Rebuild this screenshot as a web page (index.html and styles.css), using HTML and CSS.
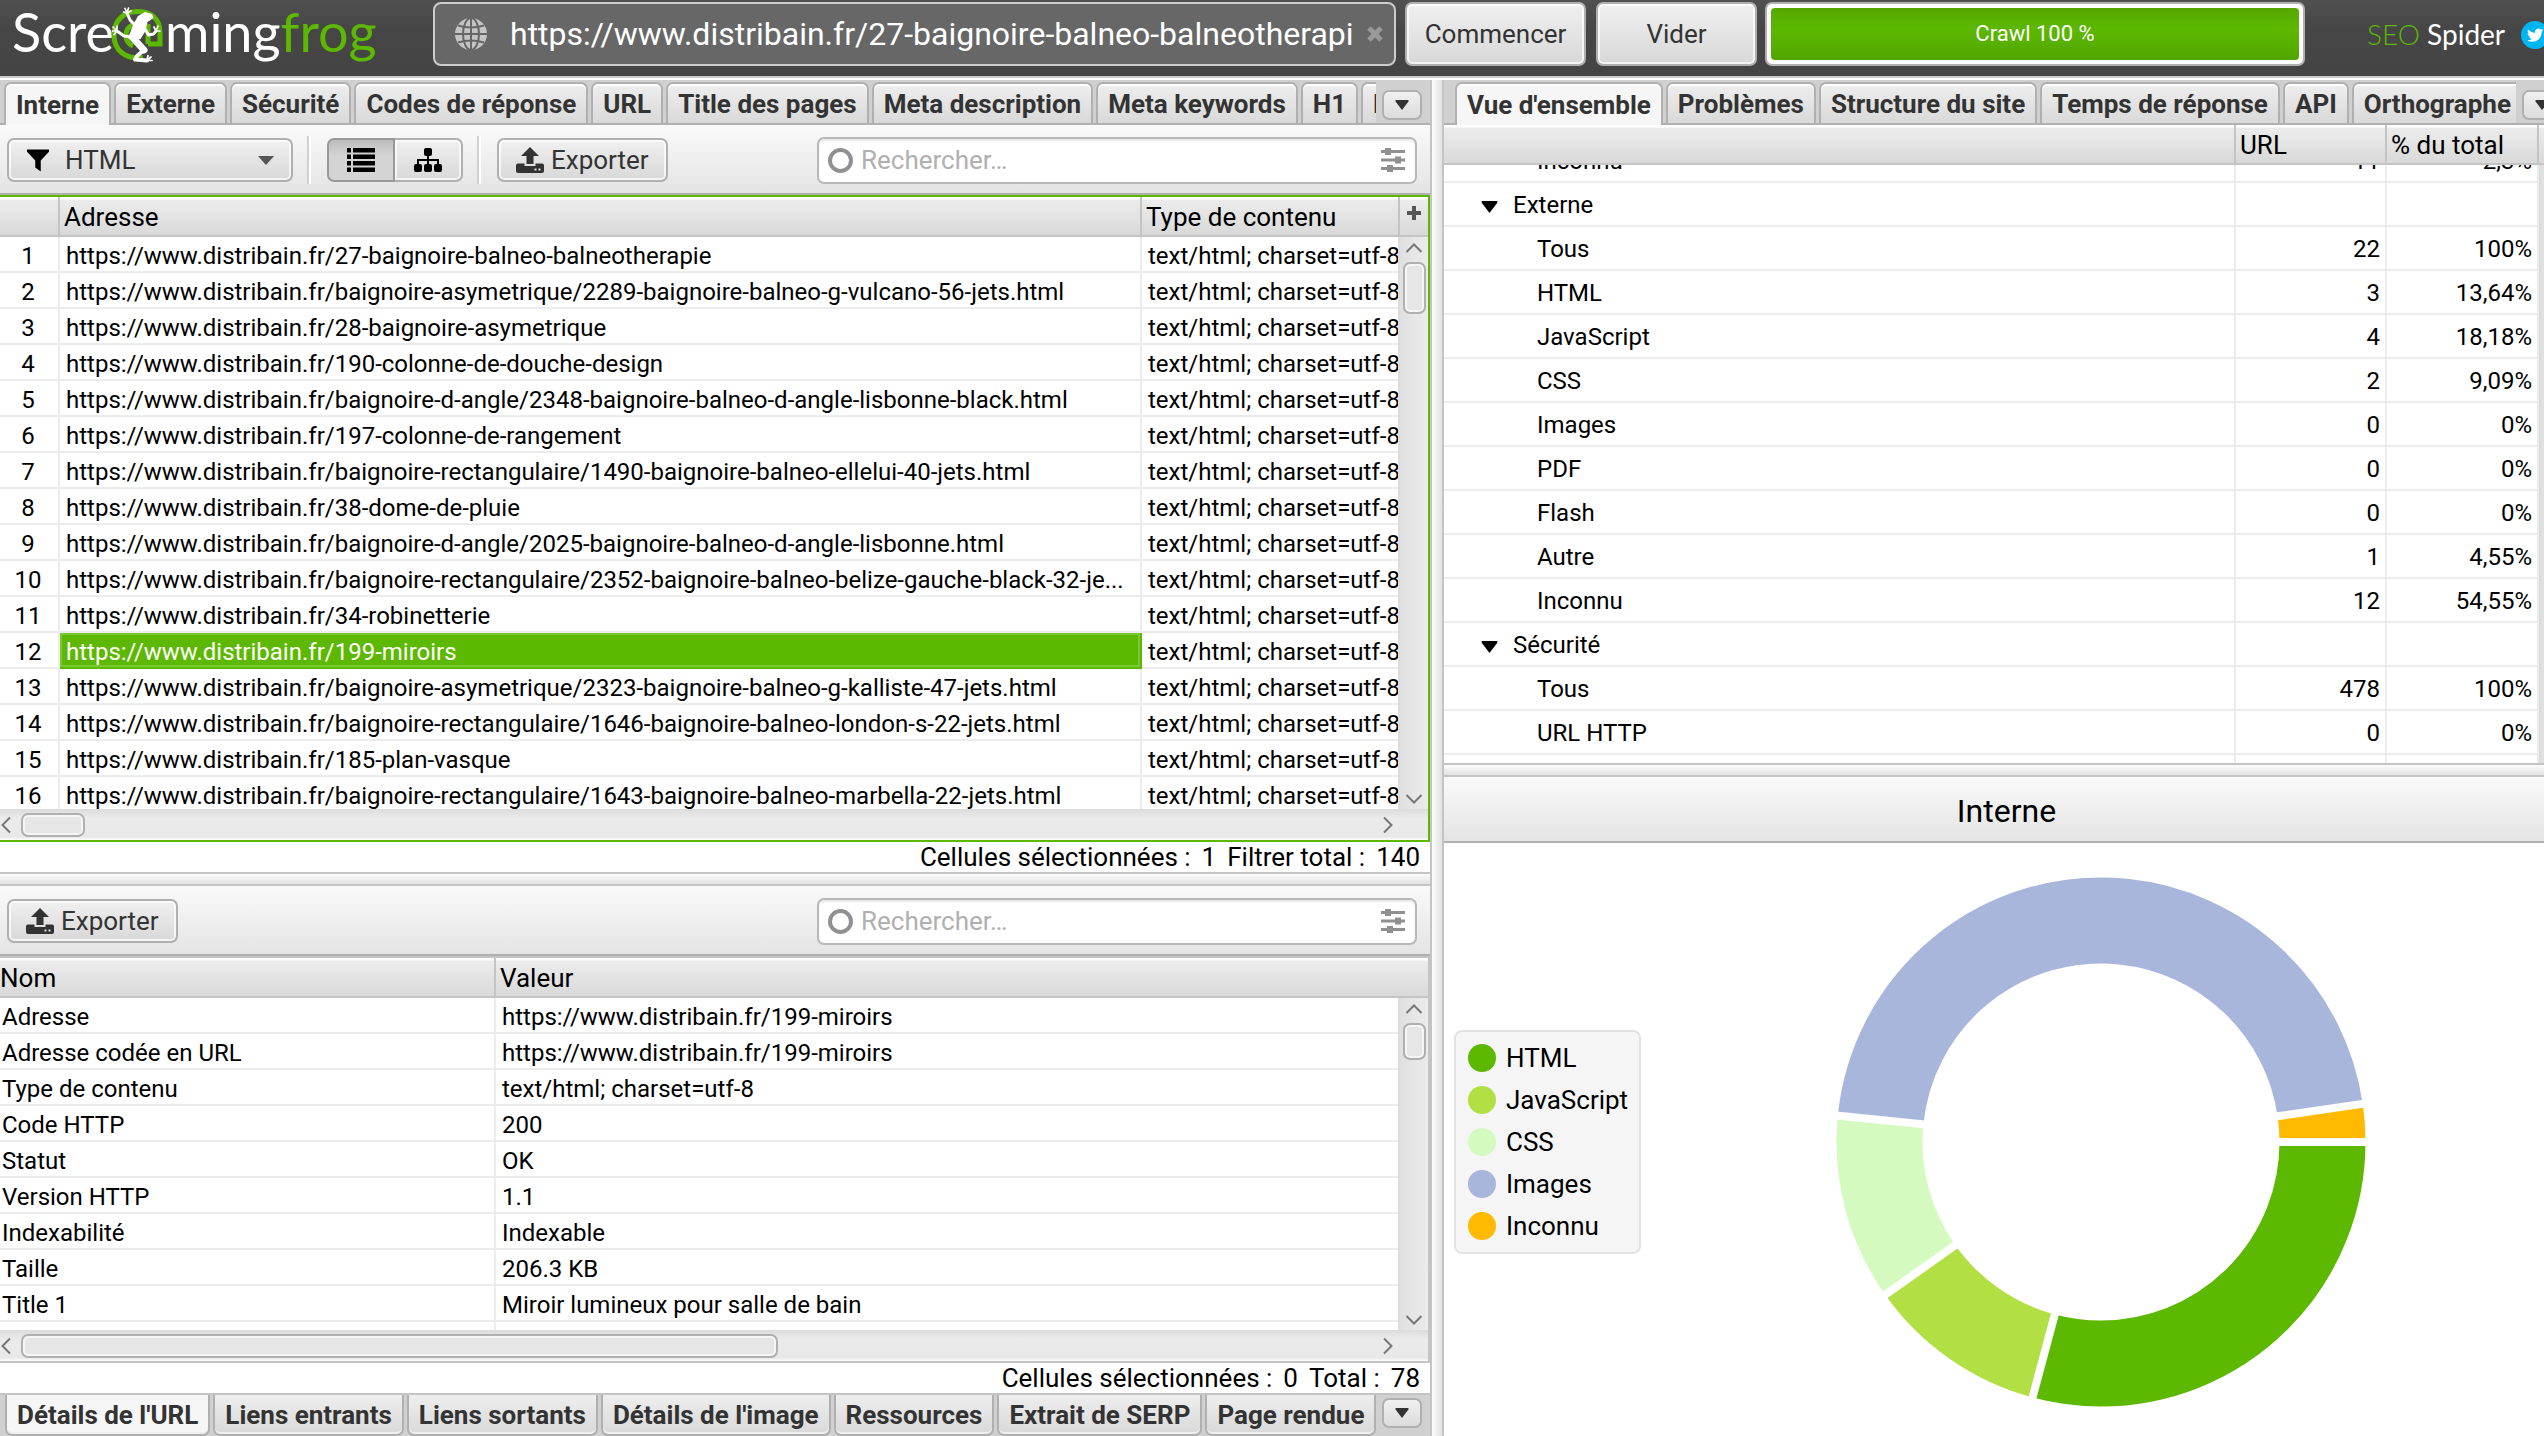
FILE: index.html
```html
<!DOCTYPE html>
<html lang="fr">
<head>
<meta charset="utf-8">
<title>Screaming Frog SEO Spider</title>
<link rel="stylesheet" href="styles.css">
</head>
<body>
<svg class="defs" aria-hidden="true">
  <symbol id="i-export" viewBox="0 0 28 26"><path d="M14 0l9 9h-5.500v8h-7V9H5z"/><path d="M2 16.500h6.500V19h11v-2.500H26a2 2 0 0 1 2 2V24a2 2 0 0 1-2 2H2a2 2 0 0 1-2-2v-5.500a2 2 0 0 1 2-2zM18.500 21.500v2h2v-2zm4 0v2h2v-2z" fill-rule="evenodd"/></symbol>
  <symbol id="i-sliders" viewBox="0 0 24 24"><path d="M0 2h24v3H0zM0 10.500h24v3H0zM0 19h24v3H0z"/><path d="M4 0h6v7H4zM14 8.500h6v7h-6zM6 17h6v7H6z"/></symbol>
  <symbol id="i-down" viewBox="0 0 16 12"><path d="M0 0h16v1.500L8 12 0 1.500z"/></symbol>
  <symbol id="i-chev" viewBox="0 0 18 10"><path d="M1.500 9L9 1.500 16.500 9" fill="none" stroke="#777" stroke-width="2"/></symbol>
</svg>
<div class="app">
  <header class="topbar">
    <div class="logo" aria-label="Screaming Frog">
      <span>Scre</span>
      <svg class="frog" viewBox="0 0 54 56">
        <path d="M32 50.500C14 53 3 43 3 28 3 13 13 4.500 27 4.500S49 13 49 25v12H37M30 17c-9-1-15 4-15 11 0 6 2 9 7 11M37 17v20" fill="none" stroke="#5cb800" stroke-width="5"/>
        <path d="M34 5l7 2 1.500 4-6 4-2 9-5 8-7 1.500-4.500-5L22 18l5-9z" fill="#fff"/>
        <g fill="none" stroke="#fff" stroke-linecap="round" stroke-linejoin="round">
          <path d="M24 18l-5-5-3-7M20 30l-7-1-7-5M34 22l3.500 6 5-1 2.500-3" stroke-width="3"/>
          <path d="M21 30l12 13" stroke-width="7"/>
          <path d="M33 43l-7 6-2 3.500 12 1" stroke-width="4"/>
          <path d="M16 6l-3.500-1M16 6l-2-4.500M16 6l1.500-5M16 6l4-2M6 24l-4-4M6 24H1.500M6 24l-3 3.500M6 24V19M45 24l-2-4M45 24l2-5M45 24l4 0M36 53.500h5M36 53.500l4-3.500M36 53.500l1-5" stroke-width="1.700"/>
        </g>
      </svg>
      <span>ming</span><span class="brand">frog</span>
    </div>
    <div class="urlbox">
      <svg class="globe" viewBox="0 0 32 32"><circle cx="16" cy="16" r="16" fill="#c4c4c4"/><g fill="none" stroke="#666" stroke-width="2"><path d="M16 0v32M0 16h32M3 7.500q13 4 26 0M3 24.500q13-4 26 0"/><ellipse cx="16" cy="16" rx="8" ry="16"/></g></svg>
      <input class="url-input" type="text" aria-label="URL" value="https://www.distribain.fr/27-baignoire-balneo-balneotherapie">
      <button class="clear" aria-label="Effacer"><svg viewBox="0 0 18 18"><path d="M3 3l12 12M15 3L3 15" stroke="#999" stroke-width="5"/></svg></button>
    </div>
    <button class="btn btn-start">Commencer</button>
    <button class="btn btn-clear">Vider</button>
    <div class="progress"><div class="bar">Crawl 100 %</div></div>
    <div class="product"><span class="brand light">SEO</span> Spider</div>
    <a class="twitter" href="#" aria-label="Twitter"><svg viewBox="0 0 28 28"><circle cx="14" cy="14" r="14" fill="#00b6f1"/><path transform="translate(6 6) scale(.68)" fill="#fff" d="M23.953 4.570a10 10 0 01-2.825.775 4.958 4.958 0 002.163-2.723c-.951.555-2.005.959-3.127 1.184a4.920 4.920 0 00-8.384 4.482C7.690 8.095 4.067 6.130 1.640 3.162a4.822 4.822 0 00-.666 2.475c0 1.710.870 3.213 2.188 4.096a4.904 4.904 0 01-2.228-.616v.060a4.923 4.923 0 003.946 4.827 4.996 4.996 0 01-2.212.085 4.936 4.936 0 004.604 3.417 9.867 9.867 0 01-6.102 2.105c-.390 0-.779-.023-1.170-.067a13.995 13.995 0 007.557 2.209c9.053 0 13.998-7.496 13.998-13.985 0-.210 0-.420-.015-.630A9.935 9.935 0 0024 4.590z"/></svg></a>
  </header>

  <main class="work">
    <section class="left">
      <div class="pane">
        <nav class="tabs">
          <div class="tablist">
            <button class="tab active">Interne</button><button class="tab">Externe</button><button class="tab">Sécurité</button><button class="tab">Codes de réponse</button><button class="tab">URL</button><button class="tab">Title des pages</button><button class="tab">Meta description</button><button class="tab">Meta keywords</button><button class="tab">H1</button><button class="tab">H2</button>
          </div>
          <button class="more" aria-label="Plus d'onglets"><svg viewBox="0 0 16 12"><use href="#i-down"/></svg></button>
        </nav>
        <div class="toolbar">
          <div class="filter">
            <svg class="funnel" viewBox="0 0 24 24"><path d="M0 0h24v2.500L15 12v12l-6-4.500V12L0 2.500z"/></svg>
            <select class="btn" aria-label="Filtre"><option>HTML</option></select>
            <svg class="caret" viewBox="0 0 18 10"><path d="M0 0h18L9 10z" fill="#555"/></svg>
          </div>
          <i class="sep"></i>
          <div class="toggle">
            <button class="btn on" aria-label="Liste"><svg viewBox="0 0 28 24"><path d="M0 0h4v4.500H0zM6 0h22v4.500H6zM0 6.500h4V11H0zM6 6.500h22V11H6zM0 13h4v4.500H0zM6 13h22v4.500H6zM0 19.500h4V24H0zM6 19.500h22V24H6z"/></svg></button><button class="btn" aria-label="Arborescence"><svg viewBox="0 0 28 24"><rect x="10" width="8" height="8" rx="2"/><rect y="16" width="8" height="8" rx="2"/><rect x="10" y="16" width="8" height="8" rx="2"/><rect x="20" y="16" width="8" height="8" rx="2"/><path d="M14 6v11M4 17v-5h20v5" fill="none" stroke="#000" stroke-width="2"/></svg></button>
          </div>
          <i class="sep"></i>
          <button class="btn export"><svg viewBox="0 0 28 26"><use href="#i-export"/></svg>Exporter</button>
          <div class="search"><i class="ring"></i><input type="text" placeholder="Rechercher…" aria-label="Rechercher dans les URL"><svg viewBox="0 0 24 24"><use href="#i-sliders"/></svg></div>
        </div>
        <div class="grid focus">
          <div class="view">
            <table class="data urls">
              <colgroup><col class="c-num"><col><col class="c-type"></colgroup>
              <thead><tr><th></th><th>Adresse</th><th>Type de contenu</th></tr></thead>
              <tbody>
                <tr><td>1</td><td>https://www.distribain.fr/27-baignoire-balneo-balneotherapie</td><td>text/html; charset=utf-8</td></tr>
                <tr><td>2</td><td>https://www.distribain.fr/baignoire-asymetrique/2289-baignoire-balneo-g-vulcano-56-jets.html</td><td>text/html; charset=utf-8</td></tr>
                <tr><td>3</td><td>https://www.distribain.fr/28-baignoire-asymetrique</td><td>text/html; charset=utf-8</td></tr>
                <tr><td>4</td><td>https://www.distribain.fr/190-colonne-de-douche-design</td><td>text/html; charset=utf-8</td></tr>
                <tr><td>5</td><td>https://www.distribain.fr/baignoire-d-angle/2348-baignoire-balneo-d-angle-lisbonne-black.html</td><td>text/html; charset=utf-8</td></tr>
                <tr><td>6</td><td>https://www.distribain.fr/197-colonne-de-rangement</td><td>text/html; charset=utf-8</td></tr>
                <tr><td>7</td><td>https://www.distribain.fr/baignoire-rectangulaire/1490-baignoire-balneo-ellelui-40-jets.html</td><td>text/html; charset=utf-8</td></tr>
                <tr><td>8</td><td>https://www.distribain.fr/38-dome-de-pluie</td><td>text/html; charset=utf-8</td></tr>
                <tr><td>9</td><td>https://www.distribain.fr/baignoire-d-angle/2025-baignoire-balneo-d-angle-lisbonne.html</td><td>text/html; charset=utf-8</td></tr>
                <tr><td>10</td><td>https://www.distribain.fr/baignoire-rectangulaire/2352-baignoire-balneo-belize-gauche-black-32-je...</td><td>text/html; charset=utf-8</td></tr>
                <tr><td>11</td><td>https://www.distribain.fr/34-robinetterie</td><td>text/html; charset=utf-8</td></tr>
                <tr><td>12</td><td class="selected">https://www.distribain.fr/199-miroirs</td><td>text/html; charset=utf-8</td></tr>
                <tr><td>13</td><td>https://www.distribain.fr/baignoire-asymetrique/2323-baignoire-balneo-g-kalliste-47-jets.html</td><td>text/html; charset=utf-8</td></tr>
                <tr><td>14</td><td>https://www.distribain.fr/baignoire-rectangulaire/1646-baignoire-balneo-london-s-22-jets.html</td><td>text/html; charset=utf-8</td></tr>
                <tr><td>15</td><td>https://www.distribain.fr/185-plan-vasque</td><td>text/html; charset=utf-8</td></tr>
                <tr><td>16</td><td>https://www.distribain.fr/baignoire-rectangulaire/1643-baignoire-balneo-marbella-22-jets.html</td><td>text/html; charset=utf-8</td></tr>
              </tbody>
            </table>
          </div>
          <div class="vcol">
            <button class="corner divided" aria-label="Colonnes"><svg viewBox="0 0 14 14"><path d="M7 0v14M0 7h14" stroke="#555" stroke-width="4"/></svg></button>
            <div class="vbar"><svg viewBox="0 0 18 10"><use href="#i-chev"/></svg><i class="thumb tall"></i><svg class="flip" viewBox="0 0 18 10"><use href="#i-chev"/></svg></div>
          </div>
          <div class="hbar"><svg viewBox="0 0 10 18"><path d="M9 1.500L1.500 9 9 16.500" fill="none" stroke="#777" stroke-width="2"/></svg><div class="track"><i class="thumb short"></i></div><svg viewBox="0 0 10 18"><path d="M1 1.500L8.500 9 1 16.500" fill="none" stroke="#777" stroke-width="2"/></svg></div>
        </div>
        <div class="status"><span>Cellules sélectionnées :</span><span>1</span><span>Filtrer total :</span><span>140</span></div>
      </div>

      <div class="hsplit"></div>

      <div class="pane">
        <div class="toolbar">
          <button class="btn export"><svg viewBox="0 0 28 26"><use href="#i-export"/></svg>Exporter</button>
          <div class="search"><i class="ring"></i><input type="text" placeholder="Rechercher…" aria-label="Rechercher dans les détails"><svg viewBox="0 0 24 24"><use href="#i-sliders"/></svg></div>
        </div>
        <div class="grid">
          <div class="view">
            <table class="data details">
              <colgroup><col class="c-name"><col></colgroup>
              <thead><tr><th>Nom</th><th>Valeur</th></tr></thead>
              <tbody>
                <tr><td>Adresse</td><td>https://www.distribain.fr/199-miroirs</td></tr>
                <tr><td>Adresse codée en URL</td><td>https://www.distribain.fr/199-miroirs</td></tr>
                <tr><td>Type de contenu</td><td>text/html; charset=utf-8</td></tr>
                <tr><td>Code HTTP</td><td>200</td></tr>
                <tr><td>Statut</td><td>OK</td></tr>
                <tr><td>Version HTTP</td><td>1.1</td></tr>
                <tr><td>Indexabilité</td><td>Indexable</td></tr>
                <tr><td>Taille</td><td>206.3 KB</td></tr>
                <tr><td>Title 1</td><td>Miroir lumineux pour salle de bain</td></tr>
                <tr><td></td><td></td></tr>
              </tbody>
            </table>
          </div>
          <div class="vcol">
            <div class="corner"></div>
            <div class="vbar"><svg viewBox="0 0 18 10"><use href="#i-chev"/></svg><i class="thumb"></i><svg class="flip" viewBox="0 0 18 10"><use href="#i-chev"/></svg></div>
          </div>
          <div class="hbar"><svg viewBox="0 0 10 18"><path d="M9 1.500L1.500 9 9 16.500" fill="none" stroke="#777" stroke-width="2"/></svg><div class="track"><i class="thumb long"></i></div><svg viewBox="0 0 10 18"><path d="M1 1.500L8.500 9 1 16.500" fill="none" stroke="#777" stroke-width="2"/></svg></div>
        </div>
        <div class="status"><span>Cellules sélectionnées :</span><span>0</span><span>Total :</span><span>78</span></div>
        <nav class="tabs bottom">
          <div class="tablist">
            <button class="tab active">Détails de l'URL</button><button class="tab">Liens entrants</button><button class="tab">Liens sortants</button><button class="tab">Détails de l'image</button><button class="tab">Ressources</button><button class="tab">Extrait de SERP</button><button class="tab">Page rendue</button>
          </div>
          <button class="more" aria-label="Plus d'onglets"><svg viewBox="0 0 16 12"><use href="#i-down"/></svg></button>
        </nav>
      </div>
    </section>

    <div class="vsplit"></div>

    <section class="right">
      <div class="pane">
        <nav class="tabs wide">
          <div class="tablist">
            <button class="tab active">Vue d'ensemble</button><button class="tab">Problèmes</button><button class="tab">Structure du site</button><button class="tab">Temps de réponse</button><button class="tab">API</button><button class="tab">Orthographe</button>
          </div>
          <button class="more" aria-label="Plus d'onglets"><svg viewBox="0 0 16 12"><use href="#i-down"/></svg></button>
        </nav>
        <div class="tree">
          <div class="view">
            <table class="data overview">
              <thead><tr><th></th><th>URL</th><th>% du total</th></tr></thead>
              <tbody>
                <tr class="cut"><td>Inconnu</td><td>11</td><td>2,3%</td></tr>
                <tr class="group"><td><svg viewBox="0 0 16 12"><use href="#i-down"/></svg>Externe</td><td></td><td></td></tr>
                <tr><td>Tous</td><td>22</td><td>100%</td></tr>
                <tr><td>HTML</td><td>3</td><td>13,64%</td></tr>
                <tr><td>JavaScript</td><td>4</td><td>18,18%</td></tr>
                <tr><td>CSS</td><td>2</td><td>9,09%</td></tr>
                <tr><td>Images</td><td>0</td><td>0%</td></tr>
                <tr><td>PDF</td><td>0</td><td>0%</td></tr>
                <tr><td>Flash</td><td>0</td><td>0%</td></tr>
                <tr><td>Autre</td><td>1</td><td>4,55%</td></tr>
                <tr><td>Inconnu</td><td>12</td><td>54,55%</td></tr>
                <tr class="group"><td><svg viewBox="0 0 16 12"><use href="#i-down"/></svg>Sécurité</td><td></td><td></td></tr>
                <tr><td>Tous</td><td>478</td><td>100%</td></tr>
                <tr><td>URL HTTP</td><td>0</td><td>0%</td></tr>
                <tr><td></td><td></td><td></td></tr>
              </tbody>
            </table>
          </div>
          <div class="vcol"><div class="corner"></div><div class="vbar"></div></div>
        </div>
      </div>
      <div class="hsplit"></div>
      <div class="pane">
        <h2 class="chart-title">Interne</h2>
        <div class="chart">
          <ul class="legend">
            <li><i class="dot html"></i>HTML</li>
            <li><i class="dot js"></i>JavaScript</li>
            <li><i class="dot css"></i>CSS</li>
            <li><i class="dot img"></i>Images</li>
            <li><i class="dot unk"></i>Inconnu</li>
          </ul>
          <div class="plot">
            <svg class="donut" viewBox="-265 -265 530 530">
              <g fill="none" stroke-width="86">
                <circle r="221.500" pathLength="360" stroke="#5cb800" stroke-dasharray="105 255"/>
                <circle r="221.500" pathLength="360" stroke="#b2df43" stroke-dasharray="39.700 320.300" transform="rotate(105)"/>
                <circle r="221.500" pathLength="360" stroke="#d5fac0" stroke-dasharray="41 319" transform="rotate(144.700)"/>
                <circle r="221.500" pathLength="360" stroke="#a9b6dc" stroke-dasharray="166 194" transform="rotate(185.700)"/>
                <circle r="221.500" pathLength="360" stroke="#ffb900" stroke-dasharray="8.300 351.700" transform="rotate(351.700)"/>
              </g>
              <g stroke="#fff" stroke-width="8">
                <path d="M170 0h96"/><path d="M170 0h96" transform="rotate(105)"/><path d="M170 0h96" transform="rotate(144.700)"/><path d="M170 0h96" transform="rotate(185.700)"/><path d="M170 0h96" transform="rotate(351.700)"/>
              </g>
            </svg>
          </div>
        </div>
      </div>
    </section>
  </main>
</div>
</body>
</html>
```
FILE: styles.css
```css
* { box-sizing: border-box; }

html, body { height: 100%; margin: 0; overflow: hidden; }

body {
  background: #fff;
  color: #000;
  font: 24px/30px Roboto, "Liberation Sans", sans-serif;
}

button, input, select { font: inherit; color: inherit; margin: 0; }
button { padding: 0; border: 0; background: none; }
svg { display: block; flex: none; }
.defs { display: none; }

/* The window is slightly larger than the viewport on the right and bottom */
.app {
  display: flex;
  flex-direction: column;
  width: calc(100vw + 25px);
  height: calc(100vh + 4px);
}

/* Top bar */
.topbar {
  display: flex;
  flex: none;
  align-items: flex-start;
  height: 80px;
  padding-top: 2px;
  background: linear-gradient(#505050, #464646 30px, #444 76px, #ccc 76px, #ccc 78px, #fff 78px);
}

.logo {
  display: flex;
  width: 433px;
  padding-left: 12px;
  color: #fff;
  font: 54px/60px Lato, sans-serif;
}
.frog { width: 54px; height: 56px; margin: 5px 0 0 -3px; }
.brand { color: #5cb800; }
.light { font-weight: 300; }

.urlbox {
  display: flex;
  flex: 1;
  align-items: center;
  height: 64px;
  padding: 0 10px 0 20px;
  border: 2px solid #ccc;
  border-radius: 8px;
  background: #676767;
}
.globe { width: 32px; height: 32px; margin-right: 23px; }
.url-input {
  flex: 1;
  min-width: 0;
  height: 56px;
  padding: 0;
  border: 0;
  background: none;
  color: #fff;
  font-size: 32px;
}
.clear { width: 18px; margin-left: 12px; }

.btn {
  border: 2px solid #b0b0b0;
  border-radius: 7px;
  background: linear-gradient(#f0f0f0, #d8d8d8);
  box-shadow: inset 0 0 0 2px rgba(255, 255, 255, .7);
  color: #333;
  font-size: 26px;
}
.btn-start { width: 181px; height: 64px; margin-left: 9px; }
.btn-clear { width: 161px; height: 64px; margin-left: 10px; }

.progress {
  width: 540px;
  height: 64px;
  margin-left: 8px;
  padding: 4px;
  border: 2px solid #b0b0b0;
  border-radius: 7px;
  background: #fff;
}
.bar {
  height: 52px;
  border-radius: 4px;
  background: linear-gradient(#54a800, #5cb800 40%, #52a600);
  color: #fff;
  font-size: 22px;
  line-height: 52px;
  text-align: center;
}
.product { width: 154px; margin-left: 62px; color: #fff; font: 28px/64px Lato, sans-serif; }
.twitter { width: 28px; height: 28px; margin: 19px 20px 0 0; }

/* Panes */
.work {
  display: grid;
  flex: 1;
  grid-template-columns: 1432fr 12px 1125fr;
  min-height: 0;
}
.left, .right { display: grid; min-width: 0; min-height: 0; }
.left { grid-template-rows: minmax(0, 794fr) 12px minmax(0, 554fr); border-right: 2px solid #c4c4c4; }
.right { grid-template-rows: minmax(0, 685fr) 12px minmax(0, 663fr); }
.pane { display: flex; flex-direction: column; min-width: 0; min-height: 0; }
.hsplit { border-bottom: 2px solid #c4c4c4; background: linear-gradient(#fcfcfc, #e2e2e2); }
.vsplit { border-right: 2px solid #c4c4c4; background: linear-gradient(90deg, #fcfcfc, #e2e2e2); }

/* Tabs */
.tabs {
  display: flex;
  flex: none;
  height: 45px;
  padding: 2px 8px 0 4px;
  border-bottom: 2px solid #b0b0b0;
  background: #d0d0d0;
}
.tablist { display: flex; flex: 1; gap: 3px; height: 43px; min-width: 0; overflow: hidden; }
.tab {
  flex: none;
  height: 41px;
  padding: 0 10px;
  border: 2px solid #b0b0b0;
  border-bottom: 0;
  border-radius: 7px 7px 0 0;
  background: linear-gradient(#eee, #d9d9d9);
  box-shadow: inset 0 2px 0 #fff;
  color: #333;
  font-size: 26px;
  font-weight: 700;
  white-space: nowrap;
}
.tab.active { height: 43px; background: #f6f6f6; }
.more {
  display: grid;
  flex: none;
  place-items: center;
  width: 40px;
  height: 30px;
  margin: 8px 0 0 6px;
  border: 2px solid #b0b0b0;
  border-radius: 7px;
  background: linear-gradient(#f0f0f0, #dcdcdc);
  fill: #333;
}
.more svg { width: 16px; height: 10px; }
.wide { padding: 2px 7px 0 11px; }
.bottom { padding: 0 8px 0 5px; border-bottom: 0; }
.bottom .tab {
  height: 41px;
  border: 2px solid #b0b0b0;
  border-top: 0;
  border-radius: 0 0 7px 7px;
  box-shadow: inset 0 -2px 0 #eee;
}
.bottom .more { margin-top: 3px; }

/* Toolbars */
.toolbar {
  display: flex;
  flex: none;
  align-items: center;
  height: 70px;
  padding: 2px 13px 0 7px;
  border-bottom: 2px solid #b0b0b0;
  background: linear-gradient(#fafafa, #e4e4e4);
}
.filter { position: relative; width: 286px; }
.filter select { width: 100%; height: 44px; padding: 0 40px 0 56px; appearance: none; }
.funnel { position: absolute; left: 20px; top: 11px; width: 22px; height: 23px; }
.caret { position: absolute; right: 18px; top: 18px; width: 18px; height: 9px; }
.sep { width: 4px; height: 48px; margin: 0 16px 0 14px; border: solid; border-width: 0 2px; border-color: #fff #fff #fff #d0d0d0; background: #d0d0d0; }
.toggle { display: flex; }
.toggle .btn { display: grid; place-items: center; width: 68px; height: 44px; }
.toggle .btn:first-child { border-radius: 7px 0 0 7px; }
.toggle .btn:last-child { border-left: 0; border-radius: 0 7px 7px 0; }
.toggle .on { background: linear-gradient(#bdbdbd, #d4d4d4 40%); box-shadow: none; border-color: #999; }
.toggle svg { width: 28px; height: 24px; }
.export { display: flex; align-items: center; gap: 7px; width: 171px; height: 44px; padding: 0 17px; }
.export svg { width: 28px; height: 26px; fill: #333; }
.search {
  display: flex;
  align-items: center;
  width: 600px;
  height: 47px;
  margin-left: auto;
  padding: 0 10px 0 9px;
  border: 2px solid #b8b8b8;
  border-radius: 7px;
  background: #fff;
  box-shadow: inset 0 2px 2px #e8e8e8;
}
.ring { width: 25px; height: 25px; margin-right: 8px; border: 4px solid #909090; border-radius: 50%; }
.search input { flex: 1; min-width: 0; height: 40px; padding: 0; border: 0; background: none; font-size: 26px; }
.search input::placeholder { color: #b0b0b0; opacity: 1; }
.search svg { width: 24px; height: 24px; fill: #909090; }

/* Data grids */
.grid {
  display: grid;
  flex: 1;
  grid-template: minmax(0, 1fr) 31px / minmax(0, 1fr) 30px;
  min-height: 0;
  border: solid #c4c4c4;
  border-width: 2px 2px 2px 0;
}
.focus { border-color: #5cb800; }
.tree { display: grid; flex: 1; grid-template-columns: minmax(0, 1fr) 30px; min-height: 0; border-bottom: 2px solid #c4c4c4; }
.view { min-width: 0; min-height: 0; overflow: hidden; }
.vcol { display: flex; flex-direction: column; min-height: 0; }

.data { width: 100%; border-spacing: 0; table-layout: fixed; }
.data th, .data td { overflow: hidden; text-align: left; white-space: nowrap; font-weight: 400; }
.data th, .corner {
  height: 40px;
  border-bottom: 2px solid #c4c4c4;
  background: linear-gradient(#fff, #fff 2px, #ececec 3px, #d9d9d9);
}
.data th { padding: 2px 0 0 4px; border-right: 2px solid #c4c4c4; font-size: 26px; }
.data td { height: 36px; padding: 3px 0 0 6px; border: solid #ececec; border-width: 0 2px 2px 0; }
.focus .data th:last-child, .details th:last-child, .data td:last-child { border-right: 0; }
.c-num { width: 60px; }
.c-type { width: 256px; }
.c-name { width: 496px; }
.urls td:first-child { padding-right: 2px; padding-left: 0; text-align: center; }
.urls .selected {
  border-right-color: #5cb800;
  border-bottom-color: #5cb800;
  background: #5cb800;
  box-shadow: inset 2px 2px 0 #7ac933, inset -2px -2px 0 #7ac933;
  color: #fff;
}
.details th:first-child { padding-left: 0; }
.details td:first-child { padding-left: 2px; }

.overview, .overview thead, .overview tbody { display: block; }
.overview tr { display: grid; grid-template-columns: 1fr 151px 152px; }
.overview th { line-height: 36px; }
.overview td { height: 44px; padding: 2px 5px 0 93px; line-height: 40px; }
.overview td:nth-child(n+2) { padding-left: 5px; text-align: right; }
.overview td:last-child { border-right: 2px solid #ececec; }
.overview .group td:first-child { padding-left: 37px; }
.overview .group svg { display: inline-block; width: 17px; height: 12px; margin-right: 15px; }
/* The first row is scrolled half out of view */
.overview tbody { overflow: hidden; }
.overview .cut { margin-top: -26px; }

.corner { display: grid; flex: none; place-items: center; width: 30px; }
.corner svg { width: 14px; height: 14px; margin-bottom: 6px; }
.divided { border-left: 2px solid #c4c4c4; }
.vbar {
  display: flex;
  flex: 1;
  flex-direction: column;
  align-items: center;
  min-height: 0;
  padding: 6px 0 5px;
  border-left: 2px solid #dcdcdc;
  background: linear-gradient(90deg, #e0e0e0, #ececec);
}
.vbar svg { width: 18px; height: 10px; }
.flip { margin-top: auto; transform: rotate(180deg); }
.hbar { display: flex; align-items: center; grid-column: 1 / -1; padding: 0 35px 0 1px; background: linear-gradient(#dcdcdc, #ebebeb 30%, #e8e8e8 90%, #fff); }
.hbar svg { width: 10px; height: 18px; }
.track { flex: 1; padding: 0 10px; }
.thumb {
  display: block;
  width: 23px;
  height: 37px;
  margin-top: 9px;
  border: 2px solid #b0b0b0;
  border-radius: 7px;
  background: #e6e6e6;
  box-shadow: inset 0 0 0 2px #f6f6f6;
}
.tall { height: 52px; }
.track .thumb { height: 24px; margin: 0; }
.track .short { width: 64px; }
.track .long { width: 56%; }

.status {
  display: flex;
  flex: none;
  gap: 11px;
  justify-content: flex-end;
  height: 32px;
  padding-right: 10px;
  border-bottom: 2px solid #c4c4c4;
  background: #fff;
  font-size: 26px;
}

/* Chart */
.chart-title {
  flex: none;
  height: 66px;
  margin: 0;
  border-bottom: 2px solid #b0b0b0;
  background: linear-gradient(#fafafa, #e4e4e4);
  font-size: 32px;
  font-weight: 400;
  line-height: 68px;
  text-align: center;
}
.chart { display: flex; flex: 1; align-items: center; min-height: 0; padding: 0 8px 0 10px; }
.legend {
  flex: none;
  width: 187px;
  margin: 0;
  padding: 5px 12px;
  border: 2px solid #e2e2e2;
  border-radius: 8px;
  background: #f5f5f5;
  font-size: 26px;
  list-style: none;
}
.legend li { display: flex; align-items: center; gap: 10px; height: 42px; }
.dot { flex: none; width: 28px; height: 28px; border-radius: 50%; }
.html { background: #5cb800; }
.js { background: #b2df43; }
.css { background: #d5fac0; }
.img { background: #a9b6dc; }
.unk { background: #ffb900; }
.plot { display: flex; flex: 1; justify-content: center; }
.donut { width: 530px; height: 530px; }
```
